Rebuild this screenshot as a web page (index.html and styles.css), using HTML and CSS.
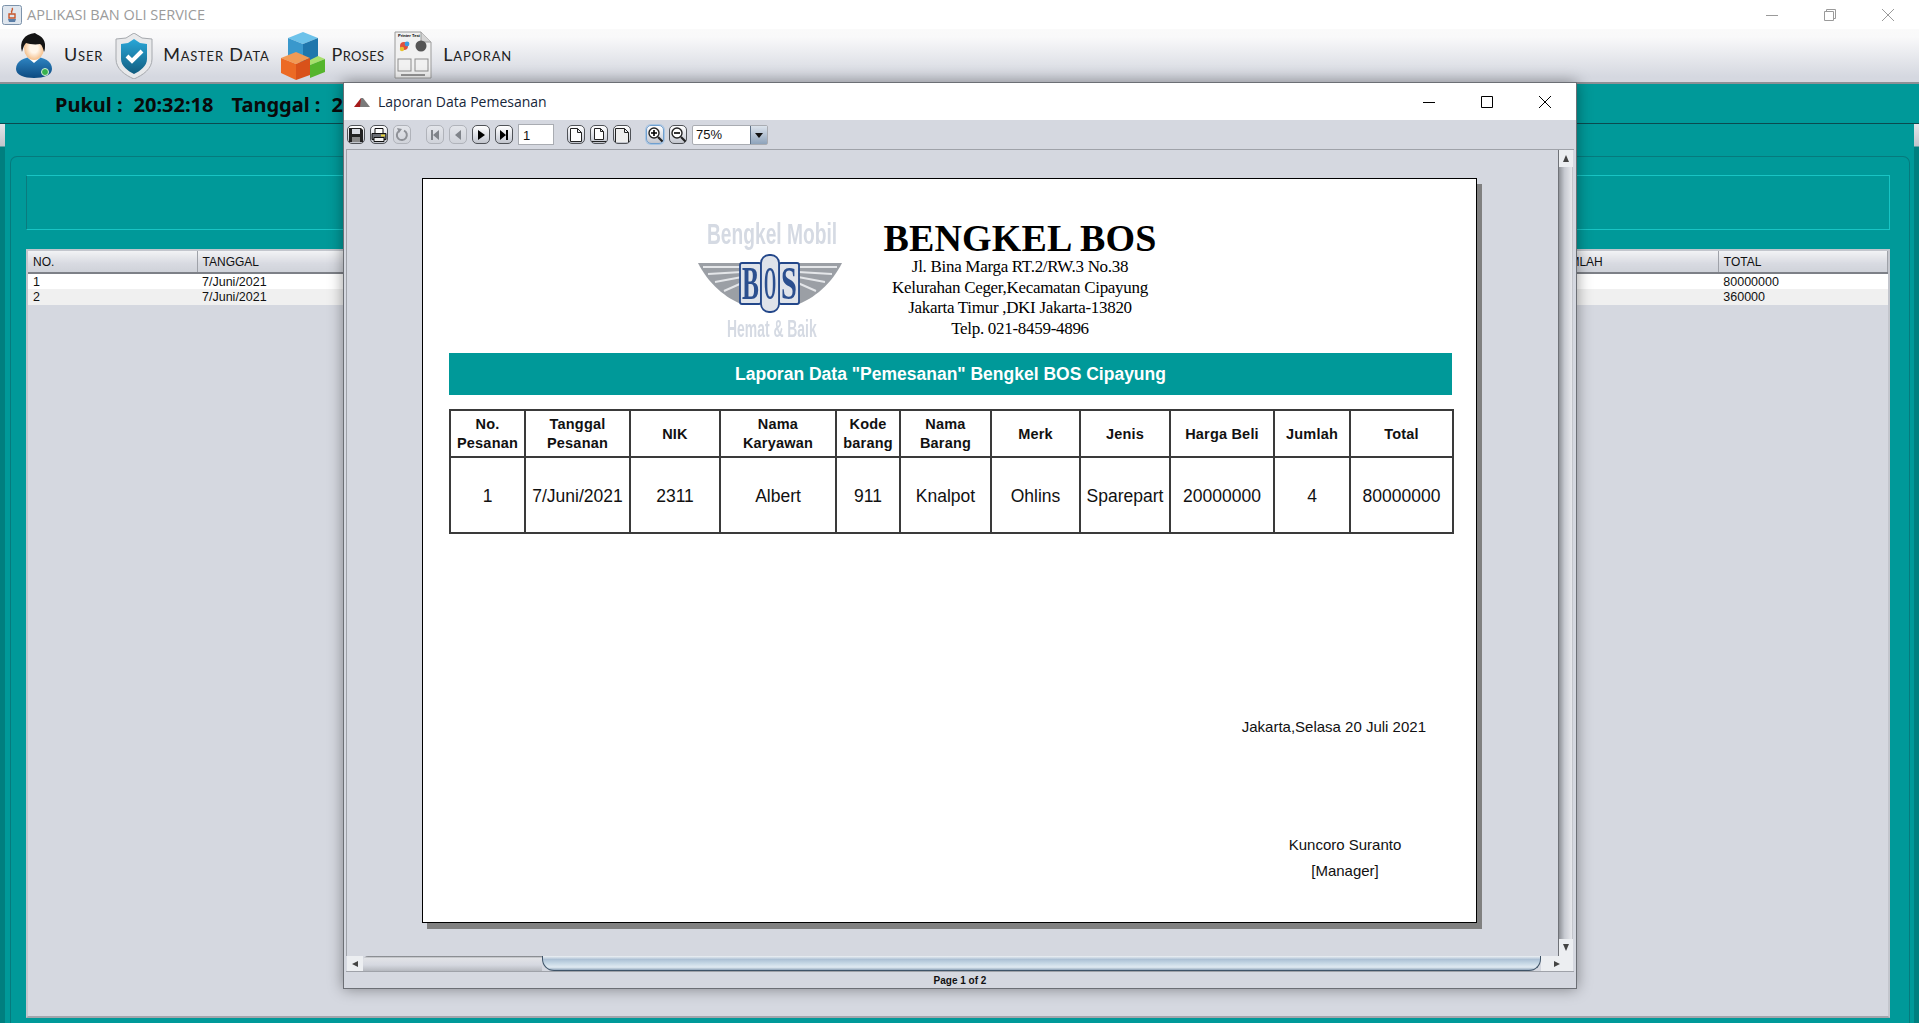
FILE: index.html
```html
<!DOCTYPE html>
<html lang="en">
<head>
    <meta charset="UTF-8">
    <meta name="viewport" content="width=device-width, initial-scale=1.0">
    <title>Aplikasi Ban Oli Service</title>
    <link rel="stylesheet" href="styles.css">
</head>
<body>
    <div class="app">
        <div class="titlebar">
            <svg class="app-icon" width="20" height="20" viewBox="0 0 20 20"><rect x="0.5" y="0.5" width="19" height="19" rx="2" fill="#dfe6ee" stroke="#7d93ab"/><path d="M6 14h8l-1 3H7z" fill="#5b7fa8"/><path d="M10 3c2 2-2 3 0 5M7 9h6v4H7z" fill="none" stroke="#c8562b" stroke-width="1.4"/></svg>
            <span class="app-title">APLIKASI BAN OLI SERVICE</span>
            <div class="win-controls">
                <svg width="14" height="14" viewBox="0 0 14 14"><path d="M1 7.5h12" stroke="#9a9a9a"/></svg>
                <svg width="14" height="14" viewBox="0 0 14 14"><path d="M1.5 3.5h9v9h-9zM3.5 3.5v-2h9v9h-2" fill="none" stroke="#9a9a9a"/></svg>
                <svg width="14" height="14" viewBox="0 0 14 14"><path d="M1 1l12 12M13 1L1 13" stroke="#9a9a9a"/></svg>
            </div>
        </div>

        <div class="menubar">
            <div class="menu-item item-user">
                <svg width="38" height="46" viewBox="0 0 38 46">
                    <defs>
                        <linearGradient id="shirt" x1="0" y1="0" x2="0" y2="1"><stop offset="0" stop-color="#2f86c4"/><stop offset="1" stop-color="#0d4a80"/></linearGradient>
                        <radialGradient id="skin"><stop offset="0.4" stop-color="#fff6ea"/><stop offset="1" stop-color="#f5c08c"/></radialGradient>
                    </defs>
                    <path d="M1 36c0-8 8-12 18-12s18 4 18 12c0 6-8 9-18 9S1 42 1 36z" fill="url(#shirt)"/>
                    <path d="M13 25l6 5 6-5-2-4h-8z" fill="#fff"/>
                    <ellipse cx="19" cy="15" rx="10" ry="12" fill="url(#skin)"/>
                    <path d="M7 19C4 9 9 1 20 0c2 2 9 3 10 11 0 4 0 6-1 8-1-4-2-7-4-8-5 1-11 0-14-1-2 2-3 5-4 9z" fill="#141414"/>
                    <circle cx="30" cy="39" r="3.5" fill="#37b24d" stroke="#d8f0dc"/>
                </svg>
                <span>User</span>
            </div>
            <div class="menu-item item-master">
                <svg width="38" height="46" viewBox="0 0 38 46">
                    <defs>
                        <linearGradient id="shield" x1="0" y1="0" x2="0" y2="1"><stop offset="0" stop-color="#29a7d8"/><stop offset="1" stop-color="#125d80"/></linearGradient>
                    </defs>
                    <path d="M19 0l8 5 10 1v20c0 10-9 16-18 20C10 42 1 36 1 26V6l10-1z" fill="#e8e9eb" stroke="#a5a8ad"/>
                    <path d="M19 6l6 4 7 1v15c0 7-7 12-13 15C13 38 6 33 6 26V11l7-1z" fill="url(#shield)"/>
                    <path d="M12 23l5 5 10-10" fill="none" stroke="#fff" stroke-width="4"/>
                </svg>
                <span>Master Data</span>
            </div>
            <div class="menu-item item-proses">
                <svg width="44" height="48" viewBox="0 0 44 48">
                    <path d="M7 6L22 0l15 6-15 6z" fill="#6cc2ea"/>
                    <path d="M7 6l15 6v20L7 25z" fill="#3a98cc"/>
                    <path d="M37 6L22 12v20l15-6z" fill="#1f76ac"/>
                    <path d="M27 29l10-5 7 3-15 6z" fill="#a8e06c"/>
                    <path d="M29 33l15-6v13l-15 6z" fill="#55b52c"/>
                    <path d="M0 26l15-6 14 6-14 6z" fill="#f29a55"/>
                    <path d="M0 26l15 6v16L0 41z" fill="#ec6a24"/>
                    <path d="M29 26L15 32v16l14-5z" fill="#d9521a"/>
                </svg>
                <span>Proses</span>
            </div>
            <div class="menu-item item-laporan">
                <svg width="38" height="50" viewBox="0 0 38 50">
                    <path d="M1 1h26l10 10v36H1z" fill="#f1f1f1" stroke="#9a9a9a"/>
                    <path d="M27 1v10h10" fill="#d5d5d5" stroke="#9a9a9a"/>
                    <text x="4" y="6" class="tiny-text">Printer Test</text>
                    <circle cx="10" cy="15" r="4" fill="#e0503c"/><circle cx="13" cy="13" r="2.4" fill="#3c9be0"/><circle cx="8" cy="18" r="2.2" fill="#e8c12f"/>
                    <circle cx="27" cy="15" r="5.5" fill="#555"/>
                    <rect x="4" y="28" width="13" height="12" fill="none" stroke="#8d8d8d"/>
                    <rect x="21" y="28" width="13" height="12" fill="none" stroke="#8d8d8d"/>
                    <path d="M7 44h24" stroke="#777" stroke-width="1.5"/>
                </svg>
                <span>Laporan</span>
            </div>
        </div>

        <div class="main">
            <div class="clock">
                <span>Pukul :</span>
                <span>20:32:18</span>
                <span class="clock-date">Tanggal :</span>
                <span>20 Juli 2021</span>
            </div>
            <div class="desktop">
                <div class="panel">
                    <div class="subpanel"></div>
                    <div class="data-box">
                        <table class="data-table">
                            <thead>
                                <tr><th>NO.</th><th>TANGGAL</th><th></th><th></th><th></th><th></th><th></th><th></th><th></th><th>JUMLAH</th><th>TOTAL</th></tr>
                            </thead>
                            <tbody>
                                <tr><td>1</td><td>7/Juni/2021</td><td></td><td></td><td></td><td></td><td></td><td></td><td></td><td></td><td>80000000</td></tr>
                                <tr><td>2</td><td>7/Juni/2021</td><td></td><td></td><td></td><td></td><td></td><td></td><td></td><td></td><td>360000</td></tr>
                            </tbody>
                        </table>
                    </div>
                </div>
            </div>
        </div>

        <div class="report-window">
            <div class="rw-title">
                <svg width="16" height="10" viewBox="0 0 16 10"><path d="M0 10L7 1l3 3-2 6z" fill="#a51b1b"/><path d="M7 1h2l7 9H6z" fill="#7a7a7a"/></svg>
                <span>Laporan Data Pemesanan</span>
                <div class="win-controls dark">
                    <svg width="14" height="14" viewBox="0 0 14 14"><path d="M1 7.5h12" stroke="#000"/></svg>
                    <svg width="14" height="14" viewBox="0 0 14 14"><path d="M1.5 1.5h11v11h-11z" fill="none" stroke="#000"/></svg>
                    <svg width="14" height="14" viewBox="0 0 14 14"><path d="M1 1l12 12M13 1L1 13" stroke="#000"/></svg>
                </div>
            </div>

            <div class="rw-toolbar">
                <button class="tb"><svg width="14" height="14" viewBox="0 0 14 14"><path d="M0 0h12l2 2v12H0z" fill="#222"/><path d="M3 1h8v5H3z" fill="#d8dbe2"/><path d="M3 9h8v5H3z" fill="#888"/></svg></button>
                <button class="tb"><svg width="16" height="14" viewBox="0 0 16 14"><path d="M4 .5h8v5H4z" fill="#fff" stroke="#111"/><path d="M1 5.500h14v6H1z" fill="#6b6e74" stroke="#111"/><path d="M3 9.500h10v4H3z" fill="#f2f2f2" stroke="#111"/><path d="M10 7.500h4" stroke="#e7d53a" stroke-width="2"/></svg></button>
                <button class="tb off"><svg width="14" height="14" viewBox="0 0 14 14"><path d="M9 2.600A5 5 0 1 1 4 3" fill="none" stroke="#8e9197" stroke-width="2"/><path d="M2 0l5 1-3 4z" fill="#8e9197"/></svg></button>
                <button class="tb off group"><svg width="10" height="10" viewBox="0 0 10 10"><path d="M1 0h2v10H1zM9 0v10L3 5z" fill="#80848a"/></svg></button>
                <button class="tb off"><svg width="10" height="10" viewBox="0 0 10 10"><path d="M8 0v10L2 5z" fill="#80848a"/></svg></button>
                <button class="tb"><svg width="10" height="10" viewBox="0 0 10 10"><path d="M2 0v10l7-5z" fill="#000"/></svg></button>
                <button class="tb"><svg width="10" height="10" viewBox="0 0 10 10"><path d="M1 0v10l6-5zM7 0h2v10H7z" fill="#000"/></svg></button>
                <div class="page-input">1</div>
                <button class="tb group-page"><svg width="12" height="14" viewBox="0 0 12 14"><path d="M.5.500h7l4 4v9H.500zM7.500.500v4h4" fill="#fff" stroke="#222"/></svg></button>
                <button class="tb"><svg width="14" height="14" viewBox="0 0 14 14"><path d="M2.500.500h6l3 3v8h-9zM8.500.500v3h3" fill="#fff" stroke="#222"/><path d="M0 13.500h14" stroke="#222"/></svg></button>
                <button class="tb"><svg width="14" height="14" viewBox="0 0 14 14"><path d="M.500 14V.500h9l4 4V14M9.500.500v4h4" fill="#eee" stroke="#222"/></svg></button>
                <button class="tb active group-zoom"><svg width="15" height="15" viewBox="0 0 15 15"><circle cx="6" cy="6" r="5" fill="#fff" stroke="#222" stroke-width="1.4"/><path d="M3 6h6M6 3v6" stroke="#000" stroke-width="1.6"/><path d="M10 10l4.500 4.500" stroke="#222" stroke-width="2.200"/></svg></button>
                <button class="tb"><svg width="15" height="15" viewBox="0 0 15 15"><circle cx="6" cy="6" r="5" fill="#fff" stroke="#222" stroke-width="1.4"/><path d="M3 6h6" stroke="#000" stroke-width="1.6"/><path d="M10 10l4.500 4.500" stroke="#222" stroke-width="2.200"/></svg></button>
                <div class="zoom-combo">
                    <span>75%</span>
                    <div class="combo-arrow"></div>
                </div>
            </div>

            <div class="rw-body">
                <div class="viewer">
                    <div class="report-page">
                        <div class="report-head">
                            <svg class="logo" width="165" height="130" viewBox="0 0 165 130">
                                <text class="logo-big" transform="translate(17 29) scale(0.64 1)">Bengkel Mobil</text>
                                <path d="M8 48h46v42C36 84 18 68 8 48z" fill="#9b9fa5"/>
                                <path d="M13 52h39M18 59l34-2M25 67l27-5M34 76l18-8" stroke="#e4e6e9" stroke-width="2"/>
                                <path d="M152 48h-46v42c18-6 36-22 46-42z" fill="#9b9fa5"/>
                                <path d="M147 52h-39M142 59l-34-2M135 67l-27-5M126 76l-18-8" stroke="#e4e6e9" stroke-width="2"/>
                                <rect x="50" y="48" width="21" height="41" rx="2" class="logo-plate"/>
                                <rect x="89" y="48" width="20" height="41" rx="2" class="logo-plate"/>
                                <rect x="71" y="40" width="18" height="57" rx="8" class="logo-plate"/>
                                <text class="logo-letter" transform="translate(52 84) scale(0.55 1)">B</text>
                                <text class="logo-letter" transform="translate(74 84) scale(0.34 1)">O</text>
                                <text class="logo-letter" transform="translate(91 84) scale(0.62 1)">S</text>
                                <text class="logo-small" transform="translate(37 122) scale(0.58 1)">Hemat &amp; Baik</text>
                            </svg>
                            <div class="company">
                                <h1>BENGKEL BOS</h1>
                                <p>Jl. Bina Marga RT.2/RW.3 No.38</p>
                                <p>Kelurahan Ceger,Kecamatan Cipayung</p>
                                <p>Jakarta Timur ,DKI Jakarta-13820</p>
                                <p>Telp. 021-8459-4896</p>
                            </div>
                        </div>
                        <div class="report-banner">Laporan Data "Pemesanan" Bengkel BOS Cipayung</div>
                        <table class="report-table">
                            <colgroup>
                                <col class="c1"><col class="c2"><col class="c3"><col class="c4"><col class="c5"><col class="c6"><col class="c7"><col class="c8"><col class="c9"><col class="c10"><col class="c11">
                            </colgroup>
                            <thead>
                                <tr>
                                    <th>No.<br>Pesanan</th>
                                    <th>Tanggal<br>Pesanan</th>
                                    <th>NIK</th>
                                    <th>Nama<br>Karyawan</th>
                                    <th>Kode<br>barang</th>
                                    <th>Nama<br>Barang</th>
                                    <th>Merk</th>
                                    <th>Jenis</th>
                                    <th>Harga Beli</th>
                                    <th>Jumlah</th>
                                    <th>Total</th>
                                </tr>
                            </thead>
                            <tbody>
                                <tr>
                                    <td>1</td><td>7/Juni/2021</td><td>2311</td><td>Albert</td><td>911</td><td>Knalpot</td><td>Ohlins</td><td>Sparepart</td><td>20000000</td><td>4</td><td>80000000</td>
                                </tr>
                            </tbody>
                        </table>
                        <div class="sign-date">Jakarta,Selasa 20 Juli 2021</div>
                        <div class="signer">
                            <div>Kuncoro Suranto</div>
                            <div>[Manager]</div>
                        </div>
                    </div>
                </div>
                <div class="vscroll">
                    <div class="arrow-box up"></div>
                    <div class="arrow-box down"></div>
                </div>
            </div>
            <div class="hscroll">
                <div class="h-arrow left"></div>
                <div class="h-track"></div>
                <div class="h-thumb"></div>
                <div class="h-arrow right"></div>
            </div>
            <div class="rw-status">Page 1 of 2</div>
        </div>
    </div>
</body>
</html>
```

FILE: styles.css
```css
* {
    box-sizing: border-box;
}
html, body {
    margin: 0;
    height: 100%;
    overflow: hidden;
}
body {
    font-family: "Liberation Sans", Arial, sans-serif;
    background-color: #d5d8e0;
}
.app {
    display: flex;
    flex-direction: column;
    height: 1023px;
    position: relative;
}

/* main frame */
.titlebar {
    height: 29px;
    background-color: #fff;
    display: flex;
    align-items: center;
    padding-left: 2px;
    flex-shrink: 0;
}
.app-icon {
    margin-right: 5px;
}
.app-title {
    font-family: "Open Sans", sans-serif;
    font-size: 14.5px;
    color: #9b9b9b;
}
.win-controls {
    margin-left: auto;
    display: flex;
    gap: 44px;
    padding-right: 24px;
}
.menubar {
    height: 55px;
    flex-shrink: 0;
    display: flex;
    align-items: center;
    background: linear-gradient(#fafafa 0%, #f9f9fa 15%, #d5d8e0 90%);
    border-bottom: 2px solid #8d9096;
    padding-left: 15px;
}
.menu-item {
    display: flex;
    align-items: center;
    font-family: "Lato", sans-serif;
    font-variant: small-caps;
    font-size: 18px;
    letter-spacing: 0.8px;
    color: #222;
}
.menu-item span {
    padding-bottom: 3px;
}
.item-user span {
    margin-left: 11px;
    margin-right: 12px;
}
.item-master span {
    margin-left: 10px;
    margin-right: 11px;
}
.item-proses span {
    margin-left: 7px;
    margin-right: 10px;
    letter-spacing: 0.3px;
}
.item-laporan span {
    margin-left: 11px;
}
.tiny-text {
    font-family: "Liberation Sans", sans-serif;
    font-size: 4px;
    font-weight: bold;
    font-variant: normal;
    letter-spacing: 0;
}
.main {
    flex: 1;
    display: flex;
    flex-direction: column;
    background-color: #009999;
    min-height: 0;
}
.clock {
    height: 40px;
    flex-shrink: 0;
    border-bottom: 1px solid #0b4a4f;
    display: flex;
    align-items: center;
    gap: 11px;
    padding-left: 55px;
    font-family: "Noto Sans", sans-serif;
    font-size: 20px;
    font-weight: bold;
    color: #0a0a0a;
}
.clock span {
    position: relative;
    top: 1px;
}
.clock-date {
    margin-left: 7px;
}
.desktop {
    flex: 1;
    min-height: 0;
    display: flex;
    background:
        linear-gradient(#e4e5e9, #c1c4cb 22px, #007f7f 23px) left top / 5px 100% no-repeat,
        linear-gradient(#e4e5e9, #c1c4cb 22px, #007f7f 23px) right top / 5px 100% no-repeat,
        #009999;
    padding: 32px 9px 0 10px;
}
.panel {
    flex: 1;
    display: flex;
    flex-direction: column;
    border: 1px solid #067a7d;
    border-bottom: 0;
    border-radius: 7px 7px 0 0;
    padding: 18px 19px 5px 15px;
    gap: 19px;
}
.subpanel {
    height: 55px;
    flex-shrink: 0;
    border: 1px solid #0a7b7e;
    border-right-color: #19c4c4;
    border-bottom-color: #19c4c4;
    border-top-color: #19c4c4;
}
.data-box {
    flex: 1;
    background-color: #d5d8e0;
    border: 2px solid #c3c6cd;
    border-bottom-color: #a2a5ac;
}
.data-table {
    border-collapse: collapse;
    table-layout: fixed;
    width: 100%;
    font-size: 12.5px;
    color: #111;
}
.data-table th {
    height: 22px;
    font-size: 12px;
    font-weight: normal;
    text-align: left;
    padding-left: 5px;
    background: linear-gradient(#f2f3f5, #d8dae1 60%, #cfd2d9);
    border-right: 1px solid #9fa2a9;
    border-bottom: 2px solid #7d8087;
}
.data-table td {
    height: 16px;
    padding: 0 0 0 5px;
    background-color: #fff;
}
.data-table tr:nth-child(2) td {
    background-color: #f0f0f0;
}

/* report window */
.report-window {
    position: absolute;
    left: 343px;
    top: 82px;
    width: 1234px;
    height: 907px;
    background-color: #d5d8e0;
    border: 1px solid #6c6f75;
    box-shadow: 0 0 14px rgba(0, 0, 0, 0.4);
    display: flex;
    flex-direction: column;
}
.rw-title {
    height: 37px;
    background-color: #fff;
    display: flex;
    align-items: center;
    padding-left: 10px;
    flex-shrink: 0;
    font-family: "Open Sans", sans-serif;
    font-size: 14px;
    color: #16263a;
}
.rw-title span {
    margin-left: 8px;
}
.rw-toolbar {
    height: 29px;
    flex-shrink: 0;
    display: flex;
    align-items: center;
    gap: 5px;
    padding-left: 3px;
}
.tb {
    width: 18px;
    height: 19px;
    padding: 0;
    border: 1px solid #4f5257;
    border-radius: 5px;
    background: linear-gradient(#fff, #d5d8e0 70%, #c2c5cc);
    display: flex;
    align-items: center;
    justify-content: center;
}
.tb.off {
    border-color: #b0b3ba;
    background: linear-gradient(#e3e5ea, #d0d3da);
}
.tb.active {
    border-color: #6f9fcf;
    box-shadow: 0 0 0 1px #a8c5e2;
}
.group {
    margin-left: 10px;
}
.group-page {
    margin-left: 8px;
}
.group-zoom {
    margin-left: 10px;
}
.page-input {
    width: 36px;
    height: 21px;
    background-color: #fff;
    border: 1px solid #a9acb2;
    font-size: 13px;
    line-height: 21px;
    padding-left: 4px;
    color: #111;
}
.zoom-combo {
    width: 76px;
    height: 20px;
    display: flex;
    background-color: #fff;
    border: 1px solid #a9acb2;
    border-radius: 2px;
    font-size: 13px;
    line-height: 18px;
    color: #111;
}
.zoom-combo span {
    flex: 1;
    padding-left: 3px;
}
.combo-arrow {
    width: 17px;
    background: linear-gradient(#dce3ec, #8ea3bb);
    border-left: 1px solid #5c6f85;
    position: relative;
}
.combo-arrow::after {
    content: "";
    position: absolute;
    left: 4px;
    top: 7px;
    border: 4px solid transparent;
    border-top: 5px solid #111;
    border-bottom: 0;
}
.rw-body {
    flex: 1;
    min-height: 0;
    display: flex;
    margin: 0 2px 0 2px;
    border-top: 1px solid #9fa2a9;
}
.viewer {
    flex: 1;
    min-width: 0;
    padding: 28px 0 0 75px;
    border-left: 1px solid #9fa2a9;
}
.report-page {
    width: 1055px;
    height: 745px;
    background-color: #fff;
    border: 1px solid #000;
    box-shadow: 5px 6px 0 #808080;
    padding: 36px 24px 0 26px;
    color: #111;
}
.report-head {
    display: flex;
    height: 130px;
    padding-left: 241px;
}
.logo {
    flex-shrink: 0;
    filter: blur(0.4px);
}
.logo-big, .logo-small {
    font-family: "Liberation Sans", sans-serif;
    font-weight: bold;
    fill: #d5dae3;
}
.logo-big {
    font-size: 30px;
}
.logo-small {
    font-size: 24px;
}
.logo-plate {
    fill: #dfe3ea;
    stroke: #23478a;
    stroke-width: 1.8px;
}
.logo-letter {
    font-family: "Liberation Serif", serif;
    font-weight: bold;
    font-size: 46px;
    fill: #2b4f8f;
}
.company {
    width: 280px;
    margin-left: 25px;
    text-align: center;
    font-family: "Liberation Serif", serif;
    color: #000;
    padding-top: 4px;
}
.company h1 {
    margin: 0;
    font-size: 38px;
    line-height: 38px;
    letter-spacing: 0.15px;
    font-weight: bold;
}
.company p {
    margin: 0;
    font-size: 17px;
    line-height: 20.5px;
    letter-spacing: -0.3px;
}
.report-banner {
    margin-top: 8px;
    height: 42px;
    background-color: #009999;
    color: #fff;
    font-size: 17.5px;
    font-weight: bold;
    line-height: 42px;
    text-align: center;
}
.report-table {
    margin-top: 14px;
    width: 1003px;
    border-collapse: collapse;
    table-layout: fixed;
    text-align: center;
    color: #111;
}
.report-table th, .report-table td {
    border: 2px solid #3a3a3a;
    padding: 0;
}
.report-table th {
    height: 47px;
    padding-top: 1px;
    font-size: 14.5px;
    line-height: 19px;
    letter-spacing: 0.2px;
}
.report-table td {
    height: 76px;
    padding-top: 3px;
    font-size: 17.5px;
}
.c1 { width: 75px; }
.c2 { width: 105px; }
.c3 { width: 90px; }
.c4 { width: 116px; }
.c5 { width: 64px; }
.c6 { width: 91px; }
.c7 { width: 89px; }
.c8 { width: 90px; }
.c9 { width: 104px; }
.c10 { width: 76px; }
.c11 { width: 103px; }
.sign-date {
    margin-top: 183px;
    padding-right: 26px;
    text-align: right;
    font-size: 15px;
    line-height: 20px;
}
.signer {
    margin-top: 95px;
    width: 160px;
    margin-left: auto;
    margin-right: 27px;
    text-align: center;
    font-size: 15px;
    line-height: 25.5px;
}
.vscroll {
    width: 15px;
    flex-shrink: 0;
    margin-right: 1px;
    display: flex;
    flex-direction: column;
    justify-content: space-between;
    background: linear-gradient(90deg, #8f9298, #c7cad1 40%, #e6e7eb 90%, #b0b3ba);
    border-left: 1px solid #6f7278;
}
.arrow-box {
    height: 17px;
    background-color: #eceef1;
    display: flex;
    align-items: center;
    justify-content: center;
}
.arrow-box::after {
    content: "";
    border-left: 3px solid transparent;
    border-right: 3px solid transparent;
}
.arrow-box.up::after {
    border-bottom: 7px solid #444;
}
.arrow-box.down::after {
    border-top: 7px solid #444;
}
.hscroll {
    height: 15px;
    flex-shrink: 0;
    margin: 0 3px;
    display: flex;
}
.h-arrow {
    width: 16px;
    background-color: #eceef1;
    display: flex;
    align-items: center;
    justify-content: center;
}
.h-arrow.right {
    width: 32px;
}
.h-arrow::after {
    content: "";
    border-top: 3px solid transparent;
    border-bottom: 3px solid transparent;
}
.h-arrow.left::after {
    border-right: 6px solid #444;
}
.h-arrow.right::after {
    border-left: 6px solid #444;
}
.h-track {
    width: 179px;
    background: linear-gradient(#6f7278 0, #e2e3e7 2px, #d5d8e0 60%, #b5b8bf);
    border-radius: 5px 0 0 0;
}
.h-thumb {
    flex: 1;
    background: linear-gradient(#eef1f4 0, #adc1d5 25%, #c4d6e4 50%, #e0eaf2 80%, #90a5ba);
    border: 1px solid #3f5468;
    border-top: 0;
    border-radius: 0 0 12px 12px;
}
.rw-status {
    height: 17px;
    flex-shrink: 0;
    margin: 0 2px;
    border-top: 1px solid #9fa2a9;
    text-align: center;
    font-size: 10px;
    font-weight: bold;
    line-height: 17px;
    color: #111;
}
```
